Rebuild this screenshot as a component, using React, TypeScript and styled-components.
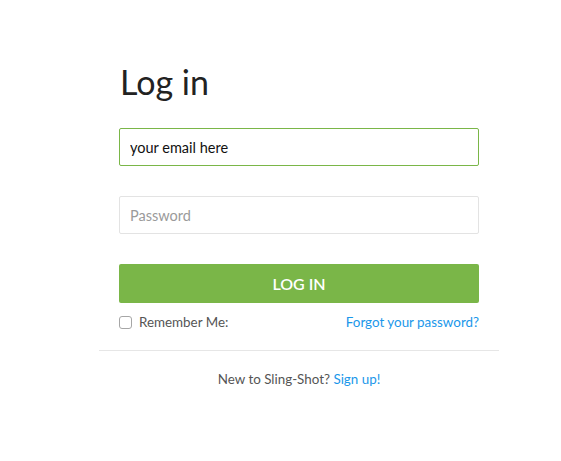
import React from "react";
import styled, { createGlobalStyle } from "styled-components";

const Global = createGlobalStyle`
  html, body { margin: 0; padding: 0; background: #fff; }
  body { font-family: "Lato", "Open Sans", sans-serif; }
  * { box-sizing: border-box; }
`;

const Page = styled.div`
  width: 561px;
  height: 461px;
  display: flex;
  padding: 58px 0 0 99px;
`;

const Card = styled.div`
  width: 400px;
  display: flex;
  flex-direction: column;
`;

const Form = styled.form`
  padding: 0 20px;
  display: flex;
  flex-direction: column;
`;

const Title = styled.h1`
  margin: 0;
  font-size: 34px;
  font-weight: 400;
  color: #222;
  line-height: 48px;
  padding-left: 1px;
`;

const Input = styled.input<{ $active?: boolean }>`
  height: 38px;
  width: 100%;
  border: 1px solid ${(p) => (p.$active ? "#7ab648" : "#e3e3e3")};
  border-radius: 2px;
  padding: 0 10px;
  font-family: inherit;
  font-size: 14.5px;
  color: #111;
  outline: none;
  margin-top: ${(p) => (p.$active ? "22px" : "30px")};
  &::placeholder { color: #9a9a9a; }
`;

const Button = styled.button`
  margin-top: 30px;
  height: 39px;
  width: 100%;
  background: #7ab648;
  border: none;
  border-radius: 2px;
  color: #fff;
  font-family: inherit;
  font-size: 16px;
  font-weight: 600;
  cursor: pointer;
`;

const Row = styled.div`
  display: flex;
  justify-content: space-between;
  align-items: center;
  margin-top: 10px;
  height: 18px;
`;

const Check = styled.label`
  display: flex;
  align-items: center;
  gap: 7px;
  font-size: 13.4px;
  color: #555;
`;

const Box = styled.input`
  appearance: none;
  margin: 0;
  width: 13px;
  height: 13px;
  border: 1px solid #a6a6a6;
  border-radius: 3px;
  background: #fff;
`;

const Link = styled.a`
  color: #1a97ea;
  font-size: 13.4px;
  text-decoration: none;
`;

const Divider = styled.hr`
  margin: 19px 0 0;
  border: none;
  border-top: 1px solid #e6e6e6;
`;

const Footer = styled.p`
  margin: 20px 0 0;
  text-align: center;
  font-size: 13.4px;
  color: #555;
`;

export default function App() {
  return (
    <Page>
      <Global />
      <Card>
        <Form onSubmit={(e) => e.preventDefault()}>
          <Title>Log in</Title>
          <Input $active type="email" defaultValue="your email here" />
          <Input type="password" placeholder="Password" />
          <Button type="submit">LOG IN</Button>
          <Row>
            <Check>
              <Box type="checkbox" />
              Remember Me:
            </Check>
            <Link href="#">Forgot your password?</Link>
          </Row>
        </Form>
        <Divider />
        <Footer>
          New to Sling-Shot? <Link href="#">Sign up!</Link>
        </Footer>
      </Card>
    </Page>
  );
}
